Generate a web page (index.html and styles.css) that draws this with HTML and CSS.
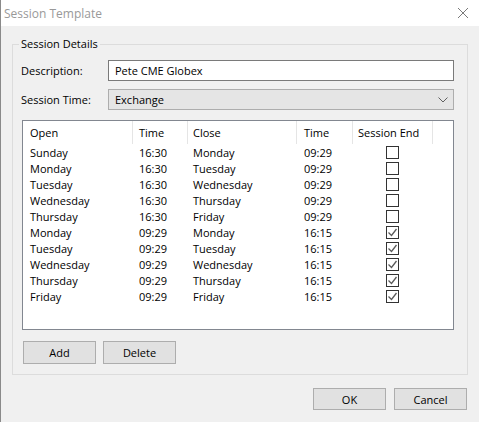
FILE: index.html
```html
<!DOCTYPE html>
<html lang="en">
<head>
    <meta charset="UTF-8">
    <meta name="viewport" content="width=device-width, initial-scale=1.0">
    <title>Session Template</title>
    <link rel="stylesheet" href="styles.css">
</head>
<body>
<div class="window">
    <div class="titlebar">
        <span class="title">Session Template</span>
        <svg class="close" width="12" height="12" viewBox="0 0 12 12">
            <path d="M1 1 L11 11 M11 1 L1 11" stroke="#7a7a7a" stroke-width="1" fill="none"/>
        </svg>
    </div>

    <div class="group">
        <span class="group-title">Session Details</span>

        <div class="field">
            <label for="desc">Description:</label>
            <input type="text" id="desc" value="Pete CME Globex">
        </div>
        <div class="field">
            <label>Session Time:</label>
            <div class="combo">
                <span>Exchange</span>
                <svg width="10" height="6" viewBox="0 0 10 6">
                    <path d="M0.5 0.5 L5 5 L9.5 0.5" stroke="#606060" stroke-width="1" fill="none"/>
                </svg>
            </div>
        </div>

        <div class="list">
            <div class="row head">
                <div class="c1">Open</div>
                <div class="c2">Time</div>
                <div class="c3">Close</div>
                <div class="c4">Time</div>
                <div class="c5">Session End</div>
            </div>
            <div id="rows"></div>
        </div>

        <div class="buttons">
            <button class="btn">Add</button>
            <button class="btn">Delete</button>
        </div>
    </div>

    <div class="footer">
        <button class="btn">OK</button>
        <button class="btn">Cancel</button>
    </div>
</div>

<script>
    var sessions = [
        ['Sunday', '16:30', 'Monday', '09:29', false],
        ['Monday', '16:30', 'Tuesday', '09:29', false],
        ['Tuesday', '16:30', 'Wednesday', '09:29', false],
        ['Wednesday', '16:30', 'Thursday', '09:29', false],
        ['Thursday', '16:30', 'Friday', '09:29', false],
        ['Monday', '09:29', 'Monday', '16:15', true],
        ['Tuesday', '09:29', 'Tuesday', '16:15', true],
        ['Wednesday', '09:29', 'Wednesday', '16:15', true],
        ['Thursday', '09:29', 'Thursday', '16:15', true],
        ['Friday', '09:29', 'Friday', '16:15', true]
    ];

    var tick = '<svg width="11" height="11" viewBox="0 0 11 11"><path d="M1.5 5.5 L4.5 8.5 L9.5 2" stroke="#5a5a5a" stroke-width="1.3" fill="none"/></svg>';
    var html = '';
    sessions.forEach(s => {
        html += `
        <div class="row">
            <div class="c1">${s[0]}</div>
            <div class="c2">${s[1]}</div>
            <div class="c3">${s[2]}</div>
            <div class="c4">${s[3]}</div>
            <div class="c5"><span class="check">${s[4] ? tick : ''}</span></div>
        </div>`;
    });
    document.getElementById('rows').innerHTML = html;
</script>
</body>
</html>
```

FILE: styles.css
```css
* {
    box-sizing: border-box;
}

body {
    margin: 0;
    background-color: #ffffff;
    font-family: "Open Sans", "Noto Sans", sans-serif;
    font-size: 11px;
    color: #000;
}

.window {
    width: 479px;
    height: 422px;
    background-color: #f0f0f0;
    border-left: 1px solid #8a8a8a;
    position: relative;
}

.titlebar {
    height: 26px;
    background-color: #fff;
    display: flex;
    align-items: center;
    justify-content: space-between;
    padding: 0 10px 0 3px;
}

.title {
    font-size: 12px;
    color: #999;
}

.group {
    position: relative;
    margin: 18px 11px 0 11px;
    height: 331px;
    border: 1px solid #dcdcdc;
    padding: 15px 13px 0 8px;
}

.group-title {
    position: absolute;
    top: -9px;
    left: 6px;
    padding: 0 2px;
    background-color: #f0f0f0;
    line-height: 16px;
}

.field {
    display: flex;
    align-items: center;
    height: 21px;
    margin-bottom: 8px;
}

.field label {
    width: 87px;
}

.field input {
    flex: 1;
    height: 21px;
    border: 1px solid #7a7a7a;
    border-radius: 0;
    padding: 0 6px;
    font-family: inherit;
    font-size: 11px;
    background: #fff;
}

.combo {
    flex: 1;
    height: 21px;
    border: 1px solid #adadad;
    background-color: #e5e5e5;
    display: flex;
    align-items: center;
    justify-content: space-between;
    padding: 0 5px 0 6px;
}

.list {
    margin-top: 10px;
    margin-left: 1px;
    height: 210px;
    border: 1px solid #828790;
    background: #fff;
}

.row {
    display: grid;
    grid-template-columns: 110px 55px 109px 56px 80px;
    height: 16px;
    align-items: center;
}

.row.head {
    height: 23px;
    align-items: stretch;
}

.row.head > div {
    border-right: 1px solid #e5e5e5;
    display: flex;
    align-items: center;
}

.c1 { padding-left: 7px; }
.c2 { padding-left: 6px; }
.c3 { padding-left: 5px; }
.c4 { padding-left: 7px; }
.c5 { padding-left: 5px; }

.row:not(.head) .c5 {
    padding-left: 33px;
    display: flex;
}

.check {
    width: 13px;
    height: 13px;
    border: 1px solid #333;
    background: #fff;
    display: flex;
    align-items: center;
    justify-content: center;
}

.buttons {
    display: flex;
    gap: 7px;
    margin-top: 11px;
    margin-left: 2px;
}

.btn {
    width: 73px;
    height: 23px;
    border: 1px solid #adadad;
    background-color: #e1e1e1;
    font-family: inherit;
    font-size: 11px;
    color: #000;
    padding: 0;
}

.footer {
    display: flex;
    justify-content: flex-end;
    gap: 8px;
    margin-top: 13px;
    padding-right: 12px;
}

.footer .btn {
    height: 22px;
}
```
